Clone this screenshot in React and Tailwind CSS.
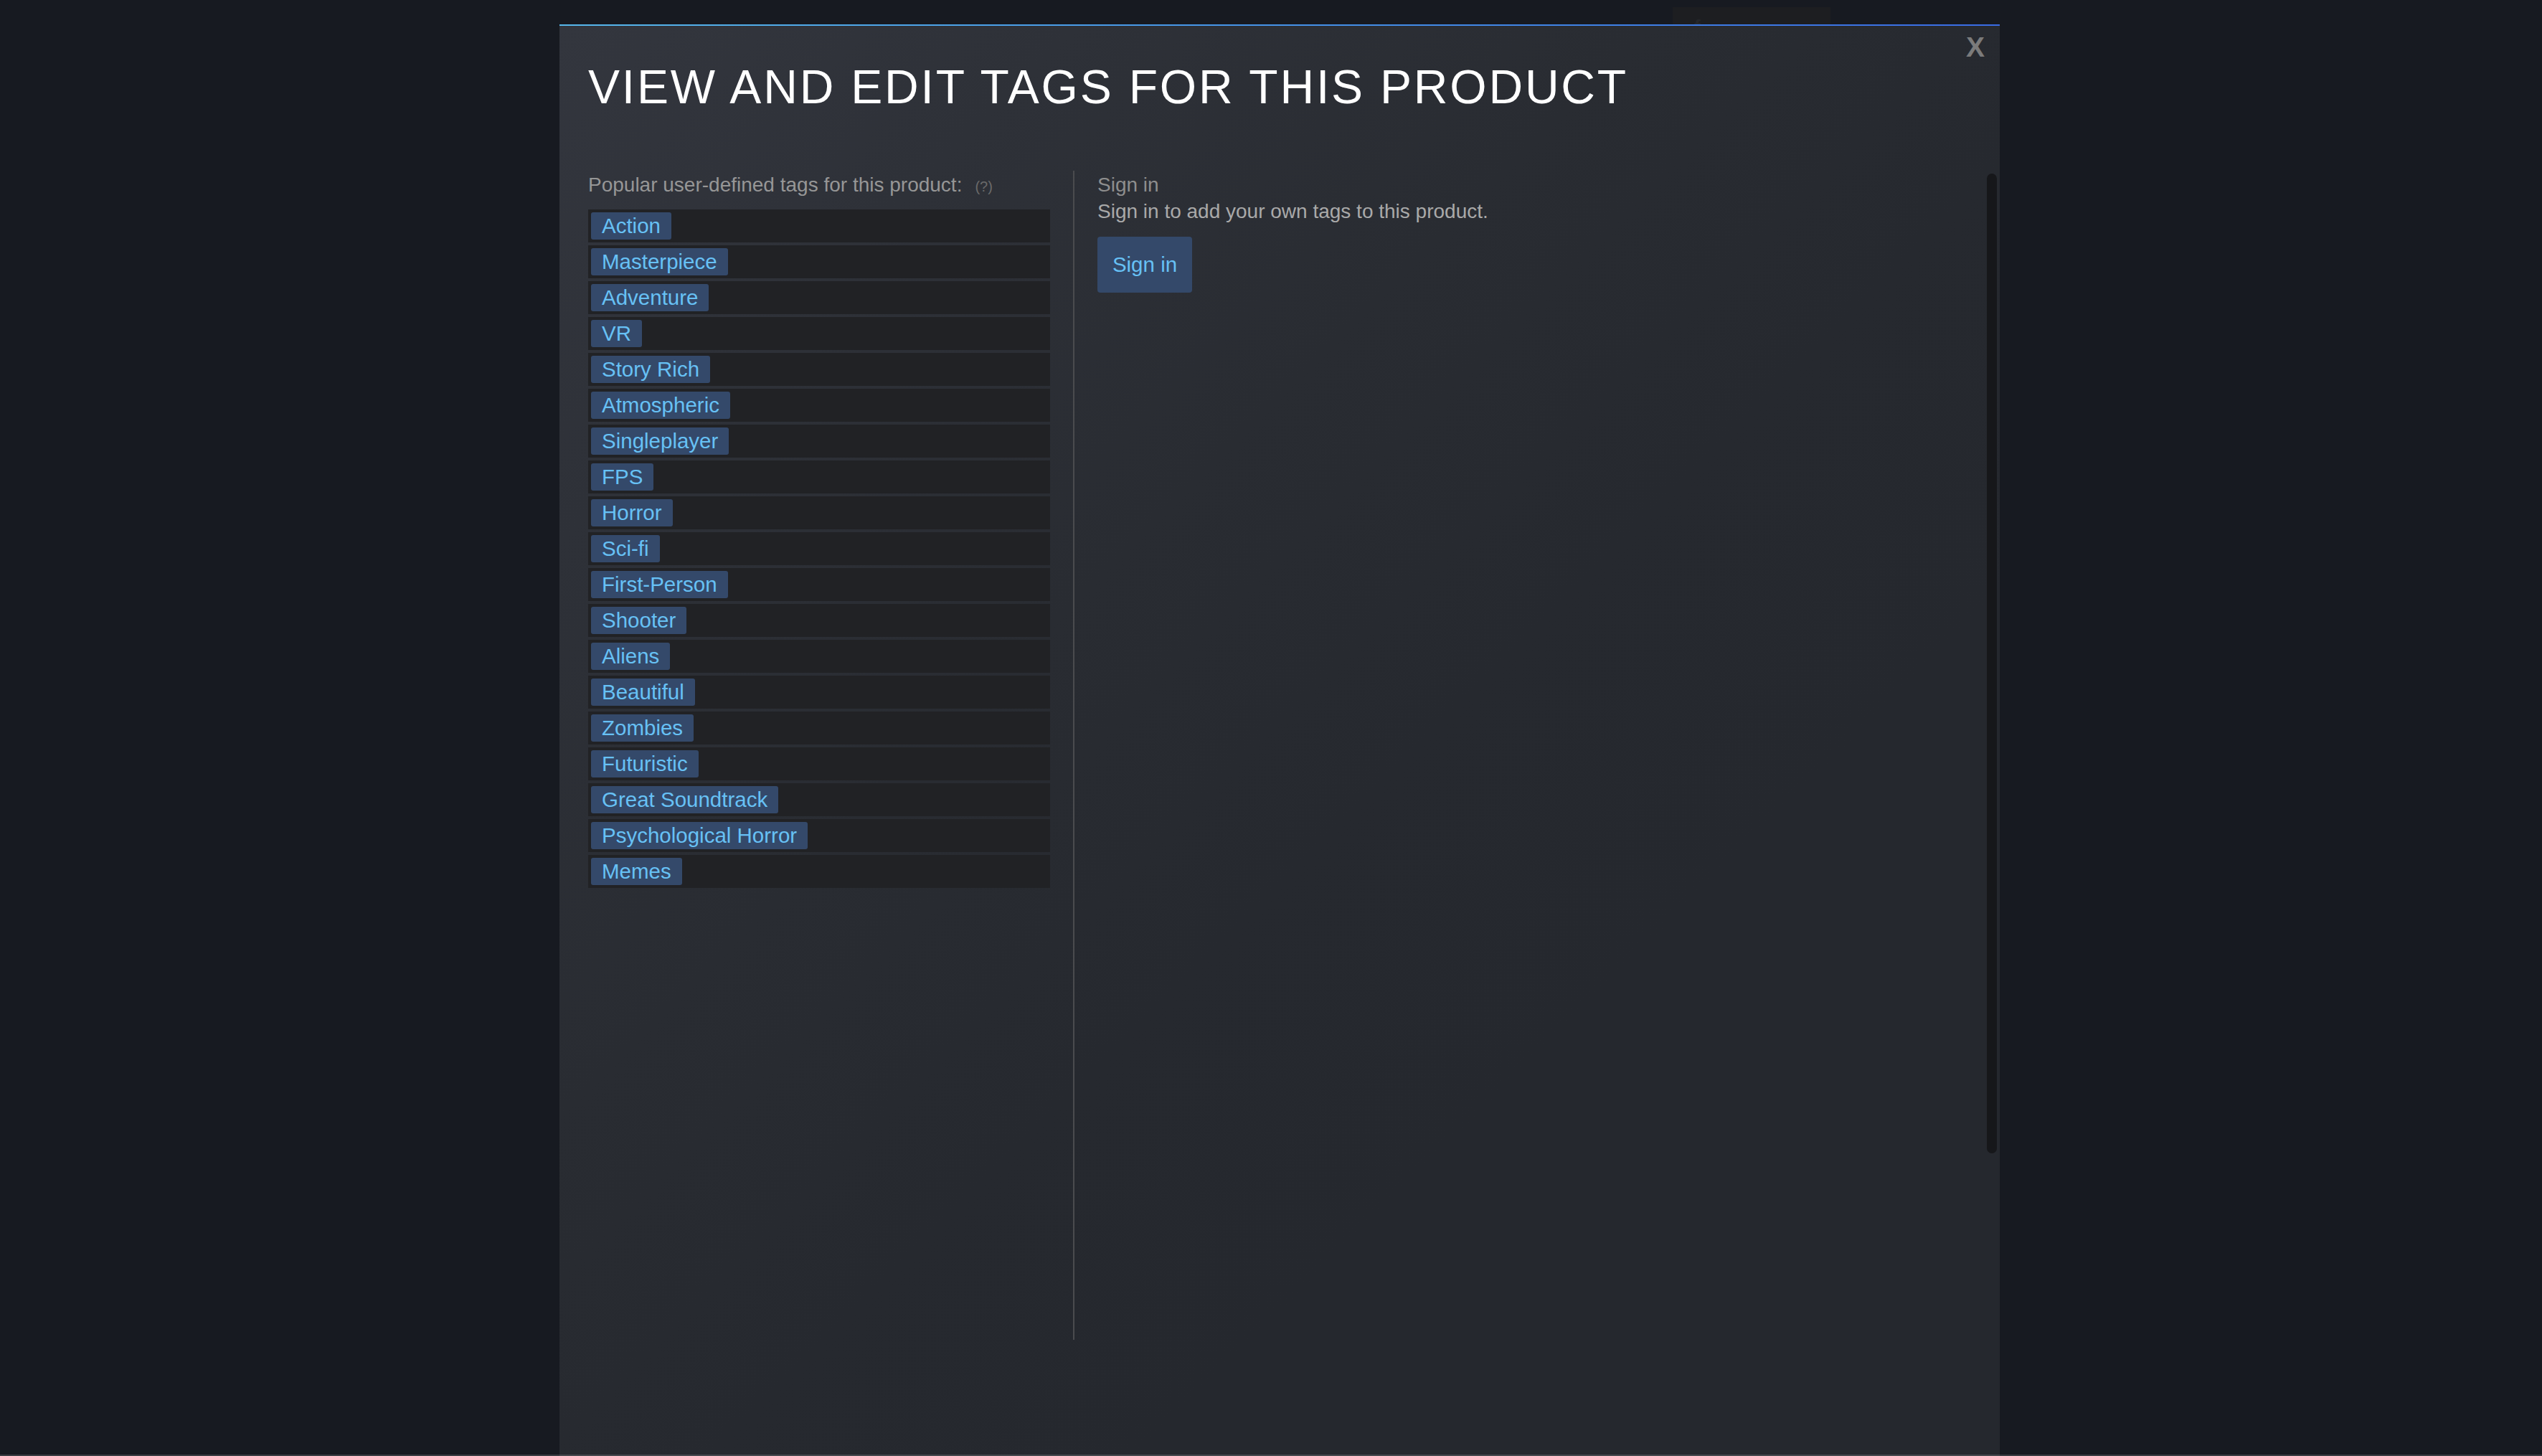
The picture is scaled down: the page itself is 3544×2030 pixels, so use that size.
import React from "react";

const TAGS = [
  "Action",
  "Masterpiece",
  "Adventure",
  "VR",
  "Story Rich",
  "Atmospheric",
  "Singleplayer",
  "FPS",
  "Horror",
  "Sci-fi",
  "First-Person",
  "Shooter",
  "Aliens",
  "Beautiful",
  "Zombies",
  "Futuristic",
  "Great Soundtrack",
  "Psychological Horror",
  "Memes",
];

export default function App() {
  return (
    <div
      className="relative w-[3544px] h-[2030px] overflow-hidden bg-[#171a21]"
      style={{ fontFamily: '"Liberation Sans", Arial, sans-serif' }}
    >
      {/* background page header (dimmed under the modal overlay) */}
      <div className="h-[34px] overflow-hidden flex items-start pl-[2332px] pt-[10px] gap-[6px]">
        <div className="flex items-start gap-[20px] w-[220px] h-[60px] bg-[#1d1e21] pl-[30px] pt-[10px]">
          <span className="text-[26px] leading-[34px] font-bold text-[#25272b]">f</span>
          <span className="pt-[12px] text-[24px] leading-[34px] text-[#25272b]">Install Steam</span>
        </div>
        <div className="pt-[22px] text-[24px] leading-[34px] text-[#23262c]">login | language</div>
      </div>

      {/* modal */}
      <div className="absolute left-[780px] top-[34px] w-[2008px] bottom-0 flex flex-col">
        <div className="h-[2px] bg-gradient-to-r from-[#57b8ec] to-[#3a6ce6]" />
        <div className="relative flex-1 bg-[#25282e] bg-[linear-gradient(135deg,#33363e_0%,#2e3138_18%,#292c32_38%,#26292f_55%,#25282e_70%)] pl-[40px] pt-[52px]">
          <div className="absolute right-[21px] top-[10px] text-[39px] leading-none font-bold text-[#7b7b7b]">X</div>

          <h1 className="text-[66px] leading-none font-normal text-white tracking-[2.8px] uppercase">
            View and edit tags for this product
          </h1>

          <div className="flex mt-[84px]">
            {/* left column */}
            <div className="w-[644px] pt-[4px]">
              <div className="flex items-baseline text-[28px] leading-[32px] text-[#969696]">
                <span>Popular user-defined tags for this product:</span>
                <span className="ml-[18px] text-[20px] text-[#6a6a6a]">(?)</span>
              </div>
              <div className="mt-[16px] flex flex-col gap-[4px]">
                {TAGS.map((t) => (
                  <div key={t} className="h-[46px] bg-[#212225] pt-[4px] pl-[4px]">
                    <span className="inline-block h-[38px] px-[15px] rounded-[3px] bg-[#34496a] text-[#67c1f5] text-[29.5px] leading-[38px]">
                      {t}
                    </span>
                  </div>
                ))}
              </div>
            </div>

            {/* right column */}
            <div className="ml-[32px] h-[1630px] border-l-2 border-[#4a4b4e] pl-[32px] pt-[4px]">
              <div className="text-[28px] leading-[32px] text-[#8e8e8e]">Sign in</div>
              <div className="mt-[5px] text-[28px] leading-[32px] text-[#a9a9a9]">
                Sign in to add your own tags to this product.
              </div>
              <div className="mt-[19px] inline-flex items-center justify-center w-[132px] h-[78px] rounded-[4px] bg-[#34496a] text-[#67c1f5] text-[29.5px]">
                Sign in
              </div>
            </div>
          </div>

          {/* scrollbar thumb */}
          <div className="absolute right-[4px] top-[206px] w-[14px] h-[1366px] rounded-full bg-[#16171a]" />
        </div>
      </div>

      {/* bottom edge line */}
      <div className="absolute left-0 right-0 bottom-0 h-[2px] bg-white/15" />
    </div>
  );
}
